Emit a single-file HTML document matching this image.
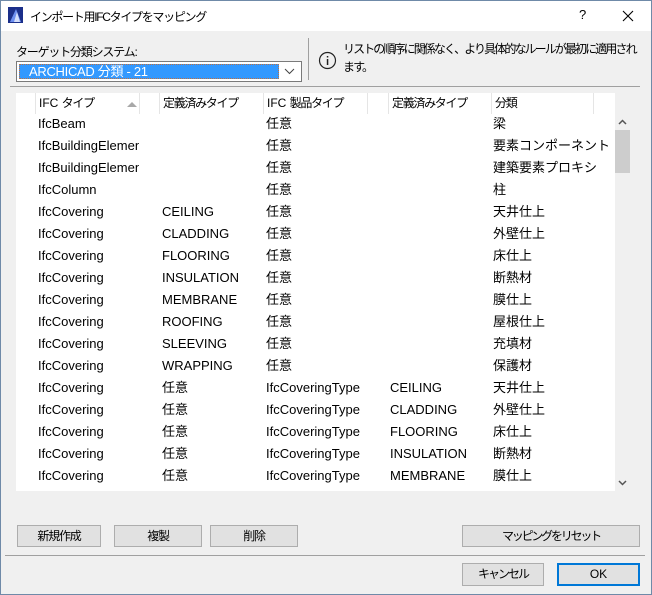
<!DOCTYPE html>
<html><head><meta charset="utf-8"><style>
*{margin:0;padding:0;box-sizing:border-box}
body{width:652px;height:595px;overflow:hidden;background:#f0f0f0;font-family:"Liberation Sans","Noto Sans CJK JP",sans-serif;font-size:12px;color:#000;position:relative}
.a{position:absolute;white-space:nowrap}
.win{position:absolute;left:0;top:0;width:652px;height:595px;border:1px solid #6f8aa8;border-top:none}
.title{position:absolute;left:0;top:0;width:652px;height:31px;background:#fff;border-top:1px solid #6f8aa8;border-left:1px solid #6f8aa8;border-right:1px solid #6f8aa8}
.btn{position:absolute;background:#e1e1e1;border:1px solid #adadad;text-align:center;line-height:20px;font-size:12px;letter-spacing:-1.2px;white-space:nowrap}
.tbl{position:absolute;left:16px;top:93px;width:599px;height:398px;background:#fff;overflow:hidden}
.hd{position:absolute;top:0;height:21px;line-height:20px;border-left:1px solid #e5e5e5;white-space:nowrap}
.hd b{font-weight:normal;letter-spacing:-1.3px}
.r{position:absolute;left:0;width:599px;height:22px;line-height:22px;font-size:13px}
.r span{position:absolute;overflow:hidden;white-space:nowrap}
</style></head><body>
<div class="title"></div>
<div class="win"></div>
<svg class="a" style="left:8px;top:7px" width="15" height="16" viewBox="0 0 15 16"><rect x="0" y="0" width="15" height="16" fill="#1b2f8a"/><path d="M2 15 L8 2 L13 15 Z" fill="#6d8ff0"/><path d="M6 15 L9 5 L12 15Z" fill="#fff" opacity=".7"/></svg>
<div class="a" style="left:30px;top:8px;font-size:12px;letter-spacing:-1.3px">インポート用IFCタイプをマッピング</div>
<div class="a" style="left:579px;top:7px;font-size:13px">?</div>
<svg class="a" style="left:622px;top:10px" width="12" height="12"><path d="M1 1L11 11M11 1L1 11" stroke="#000" stroke-width="1.1"/></svg>

<div class="a" style="left:16px;top:43px;letter-spacing:-1.2px">ターゲット分類システム:</div>
<div class="a" style="left:16px;top:61px;width:286px;height:21px;background:#fff;border:1px solid #7a7a7a"></div>
<div class="a" style="left:19px;top:64px;width:260px;height:15px;background:#3399ff;border:1px dotted #c07040;color:#fff;line-height:13px;padding-left:9px;font-size:13px;letter-spacing:-0.3px">ARCHICAD 分類 - 21</div>
<svg class="a" style="left:284px;top:68px" width="11" height="7"><path d="M1 1L5.5 5.5L10 1" stroke="#444" fill="none"/></svg>
<div class="a" style="left:308px;top:38px;width:1px;height:42px;background:#a0a0a0"></div>
<svg class="a" style="left:318px;top:51px" width="19" height="19"><circle cx="9.5" cy="9.5" r="8" fill="none" stroke="#222" stroke-width="1.2"/><rect x="8.8" y="8" width="1.5" height="6" fill="#222"/><rect x="8.8" y="5" width="1.5" height="1.5" fill="#222"/></svg>
<div class="a" style="left:343px;top:40px;line-height:18px;letter-spacing:-1.9px">リストの順序に関係なく、より具体的なルールが最初に適用され<br>ます。</div>
<div class="a" style="left:10px;top:86px;width:630px;height:1px;background:#a0a0a0"></div>

<div class="tbl">
<div class="hd" style="left:19px;width:104px;padding-left:3px">IFC <b>タイプ</b></div>
<svg class="a" style="left:111px;top:8px" width="10" height="6"><path d="M0 6L5 1L10 6Z" fill="#a8a8a8"/></svg>
<div class="hd" style="left:123px;width:20px"></div>
<div class="hd" style="left:143px;width:104px;padding-left:3px"><b>定義済みタイプ</b></div>
<div class="hd" style="left:247px;width:104px;padding-left:3px">IFC <b>製品タイプ</b></div>
<div class="hd" style="left:351px;width:21px"></div>
<div class="hd" style="left:372px;width:103px;padding-left:3px"><b>定義済みタイプ</b></div>
<div class="hd" style="left:475px;width:102px;padding-left:3px"><b>分類</b></div>
<div class="hd" style="left:577px;width:22px;border-right:none"></div>
<div id="rows"></div>
</div>
<div class="a" style="left:615px;top:113px;width:16px;height:378px;background:#f0f0f0"></div>
<svg class="a" style="left:618px;top:119px" width="9" height="6"><path d="M1 5L4.5 1.5L8 5" stroke="#555" stroke-width="1.5" fill="none"/></svg>
<div class="a" style="left:615px;top:130px;width:15px;height:43px;background:#cdcdcd"></div>
<svg class="a" style="left:618px;top:480px" width="9" height="6"><path d="M1 1L4.5 4.5L8 1" stroke="#555" stroke-width="1.5" fill="none"/></svg>

<div class="btn" style="left:17px;top:525px;width:84px;height:22px">新規作成</div>
<div class="btn" style="left:114px;top:525px;width:88px;height:22px">複製</div>
<div class="btn" style="left:210px;top:525px;width:88px;height:22px">削除</div>
<div class="btn" style="left:462px;top:525px;width:178px;height:22px;letter-spacing:-2.2px">マッピングをリセット</div>
<div class="a" style="left:5px;top:555px;width:640px;height:1px;background:#a0a0a0"></div>
<div class="btn" style="left:462px;top:563px;width:82px;height:23px;letter-spacing:-2px">キャンセル</div>
<div class="btn" style="left:557px;top:563px;width:83px;height:23px;border:2px solid #0078d7;line-height:19px;letter-spacing:0">OK</div>

<script>
var d=[["IfcBeam","","任意","","梁"],["IfcBuildingElement","","任意","","要素コンポーネント"],["IfcBuildingElement","","任意","","建築要素プロキシ"],["IfcColumn","","任意","","柱"],
["IfcCovering","CEILING","任意","","天井仕上"],["IfcCovering","CLADDING","任意","","外壁仕上"],["IfcCovering","FLOORING","任意","","床仕上"],["IfcCovering","INSULATION","任意","","断熱材"],["IfcCovering","MEMBRANE","任意","","膜仕上"],["IfcCovering","ROOFING","任意","","屋根仕上"],["IfcCovering","SLEEVING","任意","","充填材"],["IfcCovering","WRAPPING","任意","","保護材"],
["IfcCovering","任意","IfcCoveringType","CEILING","天井仕上"],["IfcCovering","任意","IfcCoveringType","CLADDING","外壁仕上"],["IfcCovering","任意","IfcCoveringType","FLOORING","床仕上"],["IfcCovering","任意","IfcCoveringType","INSULATION","断熱材"],["IfcCovering","任意","IfcCoveringType","MEMBRANE","膜仕上"]];
var x=[22,146,250,374,477],w=[101,100,120,100,122],h="";
d.forEach(function(r,i){h+='<div class="r" style="top:'+(20+i*22)+'px">';r.forEach(function(c,j){h+='<span style="left:'+x[j]+'px;width:'+w[j]+'px">'+c+'</span>'});h+='</div>'});
document.getElementById("rows").innerHTML=h;
</script>
</body></html>
